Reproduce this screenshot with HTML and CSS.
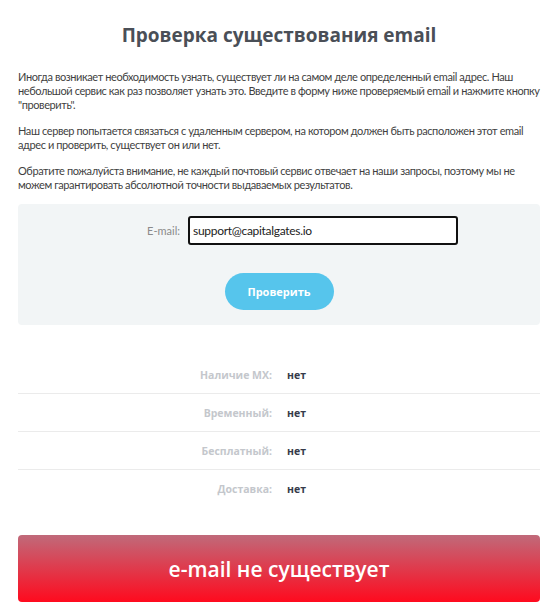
FILE: index.html
```html
<!DOCTYPE html>
<html lang="ru">
<head>
<meta charset="utf-8">
<title>Проверка существования email</title>
<link rel="stylesheet" href="styles.css">
</head>
<body>
<div class="page">
  <h1 class="title">Проверка существования email</h1>
  <p class="text">Иногда возникает необходимость узнать, существует ли на самом деле определенный email адрес. Наш небольшой сервис как раз позволяет узнать это. Введите в форму ниже проверяемый email и нажмите кнопку "проверить".</p>
  <p class="text">Наш сервер попытается связаться с удаленным сервером, на котором должен быть расположен этот email адрес и проверить, существует он или нет.</p>
  <p class="text">Обратите пожалуйста внимание, не каждый почтовый сервис отвечает на наши запросы, поэтому мы не можем гарантировать абсолютной точности выдаваемых результатов.</p>

  <form class="check-form">
    <div class="field">
      <label class="field-label" for="email">E-mail:</label>
      <input class="field-input" id="email" type="text" value="support@capitalgates.io">
    </div>
    <div class="actions">
      <button class="btn-check" type="button">Проверить</button>
    </div>
  </form>

  <div class="results">
    <div class="row"><span class="row-label">Наличие MX:</span><span class="row-value">нет</span></div>
    <div class="row"><span class="row-label">Временный:</span><span class="row-value">нет</span></div>
    <div class="row"><span class="row-label">Бесплатный:</span><span class="row-value">нет</span></div>
    <div class="row"><span class="row-label">Доставка:</span><span class="row-value">нет</span></div>
  </div>

  <div class="verdict">e-mail не существует</div>
</div>
</body>
</html>
```

FILE: styles.css
```css
* { box-sizing: border-box; }
html, body { margin: 0; padding: 0; background: #fff; }
body {
  font-family: Lato, "Open Sans", sans-serif;
  color: #3f3f3f;
}
.page {
  padding: 23px 20px 0 18px;
}
.title {
  margin: 0 0 23px;
  text-align: center;
  font-family: "Open Sans", sans-serif;
  font-weight: 700;
  font-size: 19px;
  line-height: 24px;
  color: #4a4f57;
}
.text {
  margin: 0 0 12px;
  font-size: 11px;
  line-height: 14px;
  letter-spacing: -0.4px;
}
.check-form {
  margin-top: 11px;
  background: #f2f5f6;
  border-radius: 4px;
  padding: 12px 0 15px;
}
.field {
  display: grid;
  grid-template-columns: 162px 270px;
  column-gap: 8px;
  align-items: center;
}
.field-label {
  text-align: right;
  font-size: 11px;
  color: #8a8a8a;
}
.field-input {
  height: 29px;
  border: 2px solid #111;
  border-radius: 3px;
  padding: 0 3px;
  font-family: Lato, sans-serif;
  font-size: 12px;
  letter-spacing: -0.3px;
  color: #222;
  background: #fff;
  outline: none;
}
.actions {
  display: flex;
  justify-content: center;
  margin-top: 28px;
}
.btn-check {
  width: 109px;
  height: 37px;
  border: 0;
  border-radius: 19px;
  background: #56c5ec;
  color: #fff;
  font-family: "Open Sans", sans-serif;
  font-weight: 700;
  font-size: 11px;
}
.results {
  margin-top: 31px;
}
.row {
  display: grid;
  grid-template-columns: 254px 1fr;
  column-gap: 15px;
  align-items: center;
  height: 38px;
  border-bottom: 1px solid #ebebeb;
  font-family: "Open Sans", sans-serif;
  font-weight: 700;
  font-size: 10.5px;
}
.row:last-child { border-bottom: 0; }
.row-label { text-align: right; color: #c4c7cc; }
.row-value { color: #363b4a; }
.verdict {
  margin-top: 27px;
  height: 67px;
  border-radius: 4px;
  background: linear-gradient(to bottom, #c06a7a, #ff0a1e);
  color: #fff;
  display: flex;
  align-items: center;
  justify-content: center;
  font-family: "Open Sans", sans-serif;
  font-weight: 600;
  font-size: 21px;
}
```
